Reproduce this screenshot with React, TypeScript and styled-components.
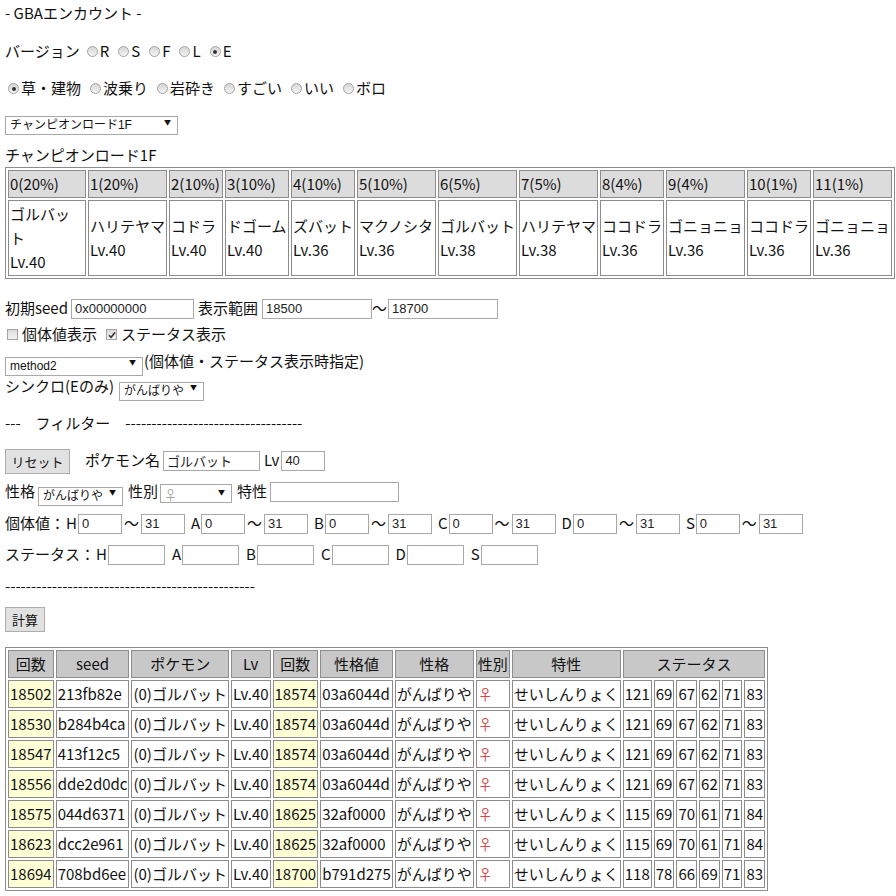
import React from 'react'
import styled, { createGlobalStyle } from 'styled-components'

const GlobalStyle = createGlobalStyle`
  body {
    margin: 0;
    background: #fff;
    color: #111;
    font-family: "Noto Sans CJK JP", "Noto Sans", sans-serif;
    font-size: 15px;
  }
`

const Page = styled.div`
  padding: 1px 5px 0;
`

const Line = styled.div<{ $h?: number; $mt?: number }>`
  height: ${({ $h }) => $h ?? 24}px;
  line-height: ${({ $h }) => $h ?? 24}px;
  margin-top: ${({ $mt }) => $mt ?? 0}px;
  white-space: nowrap;
`

const Choice = styled.label<{ $ml?: number }>`
  margin-left: ${({ $ml }) => $ml ?? 8}px;
`

const RadioMark = styled.span<{ $on?: boolean }>`
  display: inline-block;
  position: relative;
  width: 11px;
  height: 11px;
  box-sizing: border-box;
  margin: -2px 2px 0 0;
  border: 1px solid #a3a3a3;
  border-radius: 50%;
  background: linear-gradient(#d6d6d6, #f4f4f4);
  vertical-align: middle;

  &::after {
    content: '';
    display: ${({ $on }) => ($on ? 'block' : 'none')};
    position: absolute;
    left: 2.5px;
    top: 2.5px;
    width: 4px;
    height: 4px;
    border-radius: 50%;
    background: #333;
  }
`

const CheckMark = styled.span`
  display: inline-flex;
  align-items: center;
  justify-content: center;
  width: 11px;
  height: 11px;
  box-sizing: border-box;
  margin: -2px 4px 0 0;
  border: 1px solid #a3a3a3;
  background: linear-gradient(#dadada, #f4f4f4);
  vertical-align: middle;
`

const SelectBox = styled.span<{ $w: number; $ml?: number; $mr?: number }>`
  display: inline-block;
  position: relative;
  width: ${({ $w }) => $w}px;
  height: 19px;
  margin: -2px ${({ $mr }) => $mr ?? 0}px 0 ${({ $ml }) => $ml ?? 0}px;
  vertical-align: middle;

  select {
    appearance: none;
    width: 100%;
    height: 100%;
    box-sizing: border-box;
    margin: 0;
    padding: 0 0 0 4px;
    border: 1px solid #a9a9a9;
    border-radius: 0;
    background: #fff;
    color: #111;
    font: 12px "Liberation Sans", "Noto Sans CJK JP", sans-serif;
    outline: none;
  }

  &::after {
    content: '▼';
    position: absolute;
    right: 7px;
    top: 50%;
    transform: translateY(-55%);
    line-height: 8px;
    font-size: 7px;
    color: #111;
    pointer-events: none;
  }
`

const FaintSelect = styled.select`
  && {
    color: #a8a8a8;
    font: 13px "Noto Sans CJK JP", sans-serif;
    padding-left: 3px;
  }
`

const TextBox = styled.input<{ $w: number; $ml?: number; $mr?: number }>`
  width: ${({ $w }) => $w}px;
  height: 20px;
  box-sizing: border-box;
  margin: -2px ${({ $mr }) => $mr ?? 0}px 0 ${({ $ml }) => $ml ?? 0}px;
  padding: 0 3px;
  border: 1px solid #a9a9a9;
  color: #222;
  font: 13px "Liberation Sans", "Noto Sans CJK JP", sans-serif;
  vertical-align: middle;
  outline: none;
`

const Button = styled.button<{ $w: number }>`
  width: ${({ $w }) => $w}px;
  height: 25px;
  margin: 0;
  padding: 0;
  border: 1px solid #adadad;
  background: #e1e1e1;
  color: #111;
  font: 13px "Noto Sans CJK JP", sans-serif;
  vertical-align: middle;
`

const Letter = styled.span<{ $ml?: number }>`
  margin-left: ${({ $ml }) => $ml ?? 0}px;
`

const Wave = styled.span`
  margin: 0 2px;
`

const EncTable = styled.table<{ $w: number }>`
  width: ${({ $w }) => $w}px;
  table-layout: fixed;
  border: 1px solid #8c8c8c;
  border-spacing: 2px;
  font-size: 15px;
  line-height: 24px;
`

const EncHead = styled.th<{ $w: number }>`
  width: ${({ $w }) => $w}px;
  box-sizing: border-box;
  padding: 1px;
  border: 1px solid #8c8c8c;
  background: #dcdcdc;
  font-weight: normal;
  text-align: left;
  white-space: nowrap;
`

const EncCell = styled.td`
  padding: 1px;
  border: 1px solid #8c8c8c;
  vertical-align: middle;
`

const ResTable = styled.table`
  margin-top: 16px;
  border: 1px solid #8c8c8c;
  border-spacing: 2px;
  font-size: 15px;
  line-height: 24px;
  white-space: nowrap;
`

const ResHead = styled.th`
  padding: 1px;
  border: 1px solid #8c8c8c;
  background: #c8c8c8;
  font-weight: normal;
  text-align: center;
`

const ResCell = styled.td<{ $hi?: boolean }>`
  padding: 1px;
  border: 1px solid #8c8c8c;
  background: ${({ $hi }) => ($hi ? '#ffffd6' : '#fff')};
`

const Female = styled.span`
  color: #d24a4a;
`

const Tick = () => (
  <svg width="8" height="8" viewBox="0 0 8 8">
    <path d="M1 4.2 L3.1 6.3 L7 1.6" fill="none" stroke="#333" strokeWidth="1.6" />
  </svg>
)

const encounters: [string, string, string, number][] = [
  ['0(20%)', 'ゴルバット', 'Lv.40', 78],
  ['1(20%)', 'ハリテヤマ', 'Lv.40', 79],
  ['2(10%)', 'コドラ', 'Lv.40', 54],
  ['3(10%)', 'ドゴーム', 'Lv.40', 64],
  ['4(10%)', 'ズバット', 'Lv.36', 64],
  ['5(10%)', 'マクノシタ', 'Lv.36', 79],
  ['6(5%)', 'ゴルバット', 'Lv.38', 79],
  ['7(5%)', 'ハリテヤマ', 'Lv.38', 79],
  ['8(4%)', 'ココドラ', 'Lv.36', 64],
  ['9(4%)', 'ゴニョニョ', 'Lv.36', 79],
  ['10(1%)', 'ココドラ', 'Lv.36', 64],
  ['11(1%)', 'ゴニョニョ', 'Lv.36', 79]
]

const results: [string, string, string, string, number[]][] = [
  ['18502', '213fb82e', '18574', '03a6044d', [121, 69, 67, 62, 71, 83]],
  ['18530', 'b284b4ca', '18574', '03a6044d', [121, 69, 67, 62, 71, 83]],
  ['18547', '413f12c5', '18574', '03a6044d', [121, 69, 67, 62, 71, 83]],
  ['18556', 'dde2d0dc', '18574', '03a6044d', [121, 69, 67, 62, 71, 83]],
  ['18575', '044d6371', '18625', '32af0000', [115, 69, 70, 61, 71, 84]],
  ['18623', 'dcc2e961', '18625', '32af0000', [115, 69, 70, 61, 71, 84]],
  ['18694', '708bd6ee', '18700', 'b791d275', [118, 78, 66, 69, 71, 83]]
]

const stats = ['H', 'A', 'B', 'C', 'D', 'S']
const encWidth = encounters.reduce((s, e) => s + e[3], 0) + (encounters.length + 1) * 2 + 2

const App = () => {
  return (
    <Page>
      <GlobalStyle />
      <Line>- GBAエンカウント -</Line>

      <Line $mt={14}>
        バージョン
        {['R', 'S', 'F', 'L', 'E'].map((v, i) => (
          <Choice key={v} $ml={i === 0 ? 7 : 9}>
            <RadioMark $on={v === 'E'} />
            {v}
          </Choice>
        ))}
      </Line>

      <Line $mt={13}>
        {['草・建物', '波乗り', '岩砕き', 'すごい', 'いい', 'ボロ'].map((v, i) => (
          <Choice key={v} $ml={i === 0 ? 3 : 9}>
            <RadioMark $on={i === 0} />
            {v}
          </Choice>
        ))}
      </Line>

      <Line $mt={10} $h={22}>
        <SelectBox $w={173}>
          <select defaultValue="c1f">
            <option value="c1f">チャンピオンロード1F</option>
          </select>
        </SelectBox>
      </Line>

      <Line $mt={11}>チャンピオンロード1F</Line>

      <EncTable $w={encWidth}>
        <thead>
          <tr>
            {encounters.map(([slot, , , w]) => (
              <EncHead key={slot} $w={w}>
                {slot}
              </EncHead>
            ))}
          </tr>
        </thead>
        <tbody>
          <tr>
            {encounters.map(([slot, name, lv]) => (
              <EncCell key={slot}>
                {name}
                <br />
                {lv}
              </EncCell>
            ))}
          </tr>
        </tbody>
      </EncTable>

      <Line $mt={17}>
        初期seed
        <TextBox $w={123} $ml={3} $mr={4} defaultValue="0x00000000" />
        表示範囲
        <TextBox $w={110} $ml={4} defaultValue="18500" />
        ～
        <TextBox $w={110} $ml={1} defaultValue="18700" />
      </Line>

      <Line $mt={2}>
        <Choice $ml={2}>
          <CheckMark />
          個体値表示
        </Choice>
        <Choice $ml={9}>
          <CheckMark>
            <Tick />
          </CheckMark>
          ステータス表示
        </Choice>
      </Line>

      <Line $mt={3}>
        <SelectBox $w={138} $mr={1}>
          <select defaultValue="m2">
            <option value="m2">method2</option>
          </select>
        </SelectBox>
        (個体値・ステータス表示時指定)
      </Line>

      <Line $mt={1}>
        シンクロ(Eのみ)
        <SelectBox $w={85} $ml={5}>
          <select defaultValue="g">
            <option value="g">がんばりや</option>
          </select>
        </SelectBox>
      </Line>

      <Line $mt={13}>---　フィルター　{'-'.repeat(34)}</Line>

      <Line $mt={12} $h={26}>
        <Button $w={65}>リセット</Button>　ポケモン名
        <TextBox $w={97} $ml={3} $mr={4} defaultValue="ゴルバット" />
        Lv
        <TextBox $w={44} $ml={2} defaultValue="40" />
      </Line>

      <Line $mt={6}>
        性格
        <SelectBox $w={85} $ml={3} $mr={5}>
          <select defaultValue="g">
            <option value="g">がんばりや</option>
          </select>
        </SelectBox>
        性別
        <SelectBox $w={72} $ml={2} $mr={5}>
          <FaintSelect defaultValue="f">
            <option value="f">♀</option>
          </FaintSelect>
        </SelectBox>
        特性
        <TextBox $w={129} $ml={3} />
      </Line>

      <Line $mt={8}>
        個体値：
        {stats.map((s, i) => (
          <React.Fragment key={s}>
            <Letter $ml={i === 0 ? 1 : 6}>{s}</Letter>
            <TextBox $w={44} $ml={1} defaultValue="0" />
            <Wave>～</Wave>
            <TextBox $w={44} defaultValue="31" />
          </React.Fragment>
        ))}
      </Line>

      <Line $mt={7}>
        ステータス：
        {stats.map((s, i) => (
          <React.Fragment key={s}>
            <Letter $ml={i === 0 ? 1 : 7}>{s}</Letter>
            <TextBox $w={57} $ml={1} />
          </React.Fragment>
        ))}
      </Line>

      <Line $mt={8}>{'-'.repeat(48)}</Line>

      <Line $mt={7} $h={26}>
        <Button $w={40}>計算</Button>
      </Line>

      <ResTable>
        <thead>
          <tr>
            <ResHead>回数</ResHead>
            <ResHead>seed</ResHead>
            <ResHead>ポケモン</ResHead>
            <ResHead>Lv</ResHead>
            <ResHead>回数</ResHead>
            <ResHead>性格値</ResHead>
            <ResHead>性格</ResHead>
            <ResHead>性別</ResHead>
            <ResHead>特性</ResHead>
            <ResHead colSpan={6}>ステータス</ResHead>
          </tr>
        </thead>
        <tbody>
          {results.map(([count, seed, count2, pid, st]) => (
            <tr key={count}>
              <ResCell $hi>{count}</ResCell>
              <ResCell>{seed}</ResCell>
              <ResCell>(0)ゴルバット</ResCell>
              <ResCell>Lv.40</ResCell>
              <ResCell $hi>{count2}</ResCell>
              <ResCell>{pid}</ResCell>
              <ResCell>がんばりや</ResCell>
              <ResCell>
                <Female>♀</Female>
              </ResCell>
              <ResCell>せいしんりょく</ResCell>
              {st.map((v, i) => (
                <ResCell key={i}>{v}</ResCell>
              ))}
            </tr>
          ))}
        </tbody>
      </ResTable>
    </Page>
  )
}

export default App
